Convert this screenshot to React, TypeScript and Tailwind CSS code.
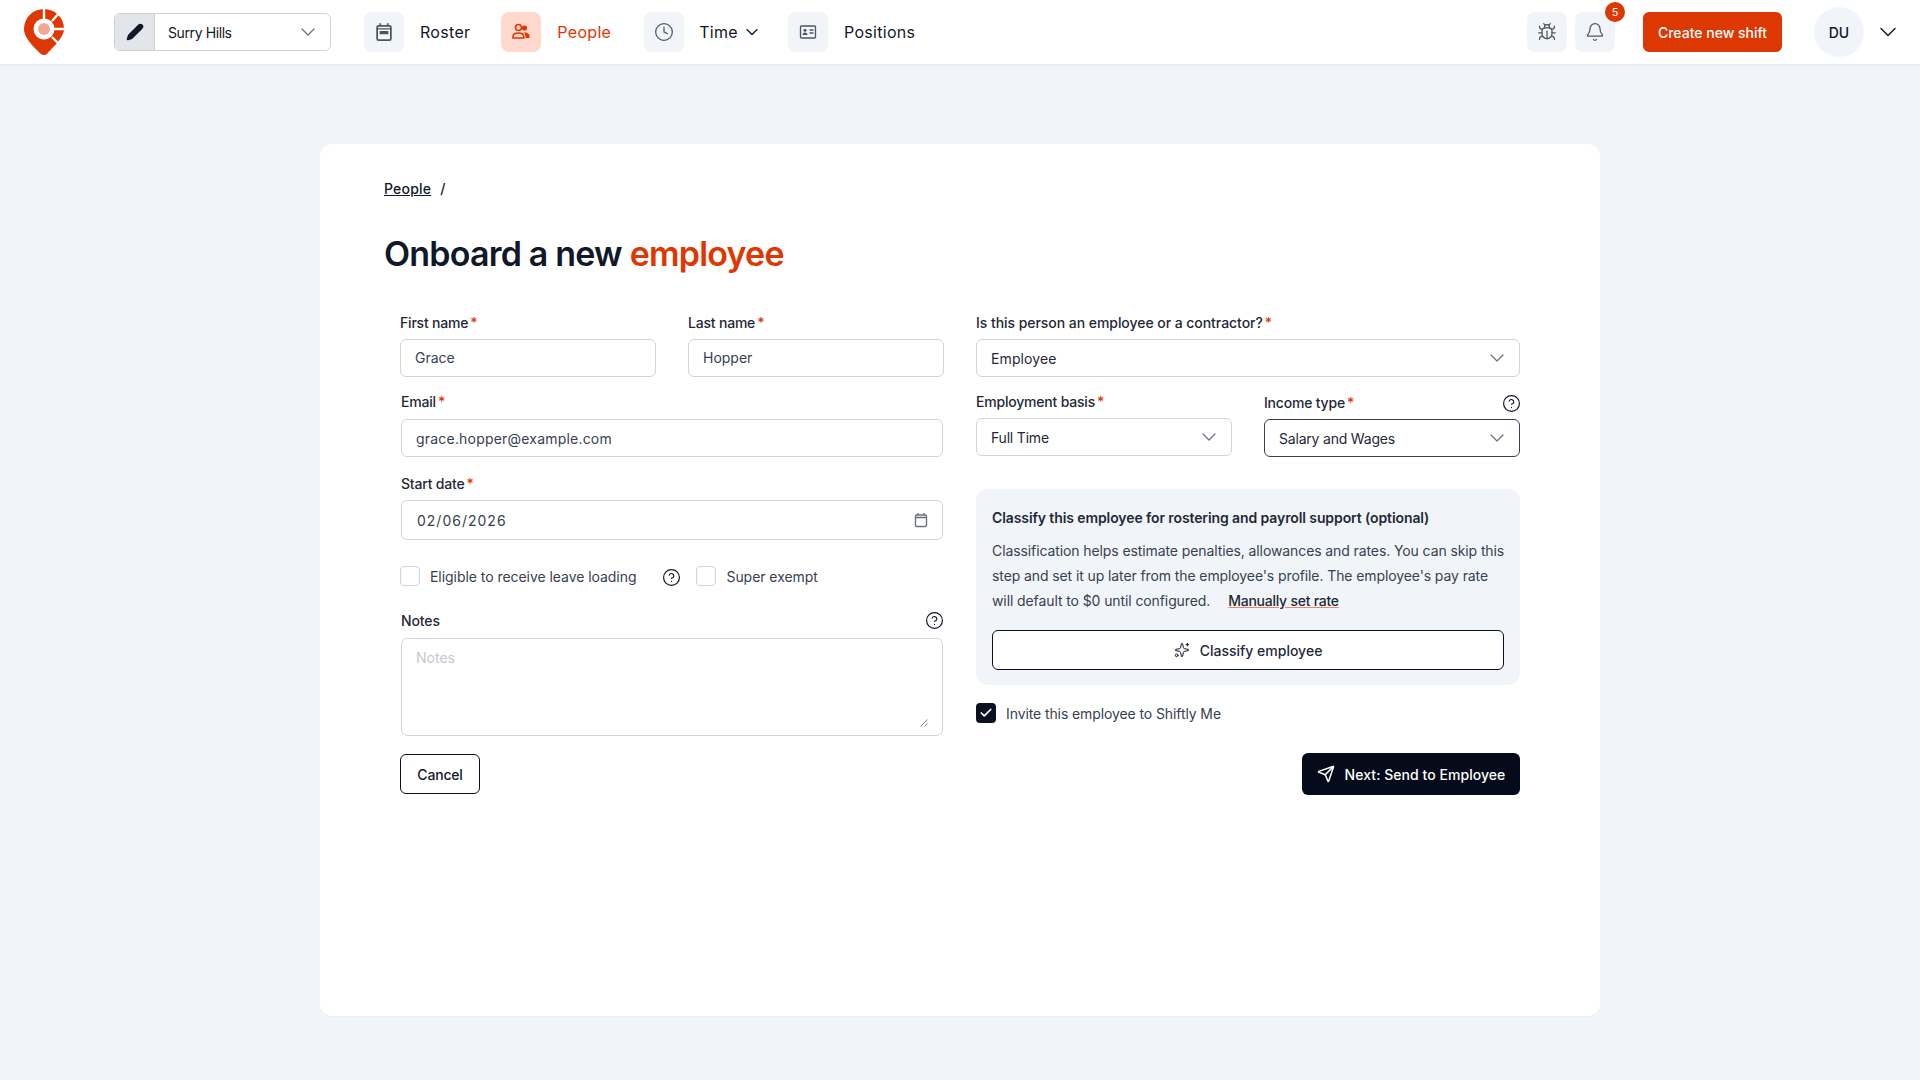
import { Bell, Bug, ChevronDown, CircleHelp, Clock, Pencil, Send, Sparkles, Check } from 'lucide-react';

const font = "font-['Inter',sans-serif]";

function Label({ text, className = '' }: { text: string; className?: string }) {
  return (
    <div className={`text-[14px] leading-[20px] font-[450] text-[#1f2937] tracking-[-0.2px] ${className}`}>
      {text}
      <span className="text-[#dd3702] ml-[2px]">*</span>
    </div>
  );
}

function TextBox({ value, className = '' }: { value: string; className?: string }) {
  return (
    <div className={`flex items-center bg-white border border-[#d1d5db] rounded-[6px] pl-[14px] pr-[14px] text-[14px] text-[#374151] ${className}`}>
      {value}
    </div>
  );
}

function SelectBox({ value, className = '' }: { value: string; className?: string }) {
  return (
    <div className={`flex items-center justify-between bg-white border border-[#d1d5db] rounded-[6px] pl-[14px] pr-[10px] text-[14px] text-[#1f2937] ${className}`}>
      <span>{value}</span>
      <ChevronDown className="w-6 h-6 text-[#6b7280]" strokeWidth={1.25} />
    </div>
  );
}

function NavItem({ icon, label, active, chevron }: { icon: React.ReactNode; label: string; active?: boolean; chevron?: boolean }) {
  return (
    <div className={`flex items-center ${chevron ? 'ml-[2px]' : ''}`}>
      <div className={`w-10 h-10 rounded-[8px] flex items-center justify-center ${active ? 'bg-[#ffd9cd] text-[#dd3702]' : 'bg-[#f1f5f9] text-[#4b5563]'}`}>
        {icon}
      </div>
      <span className={`${chevron ? 'ml-[15px]' : 'ml-4'} text-[16px] tracking-[0.3px] ${active ? 'text-[#dd3702]' : 'text-[#111827]'}`}>{label}</span>
      {chevron && <ChevronDown className="ml-[4px] -mr-[5px] w-5 h-5 text-[#111827]" strokeWidth={1.5} />}
    </div>
  );
}

function CalendarIcon({ size, bar }: { size: number; bar?: boolean }) {
  return (
    <svg width={size} height={size} viewBox="0 0 16 16" fill="none" stroke="currentColor">
      <rect x="2.5" y="3" width="11" height="11.5" rx="1.2" strokeWidth="1.4" />
      <path d="M5 1v2M11 1v2" strokeWidth="1.4" />
      <path d="M2.5 5.5h11" strokeWidth={bar ? 1 : 1.6} />
      {bar && <rect x="4.5" y="7.2" width="7" height="2.6" fill="currentColor" stroke="none" />}
    </svg>
  );
}

function PeopleIcon() {
  return (
    <svg width="20" height="20" viewBox="0 0 20 20" fill="none" stroke="currentColor" strokeWidth="1.6">
      <circle cx="7.5" cy="5.5" r="3" />
      <path d="M2 16v-1.5C2 12.5 4 11 7.5 11c1.5 0 2.8.3 3.8 1 1 .7 1.5 1.6 1.5 2.5V16z" />
      <circle cx="13.5" cy="6" r="2.6" fill="currentColor" stroke="none" />
      <path d="M12.5 10.5c3.5-.5 6 1 6 3.5V16h-4v-1.5c0-1.5-.8-3-2-4z" fill="currentColor" stroke="none" />
    </svg>
  );
}

function CardIcon() {
  return (
    <svg width="18" height="18" viewBox="0 0 18 18" fill="none" stroke="currentColor">
      <rect x="1.5" y="3" width="15" height="12" rx="1" strokeWidth="1.3" />
      <circle cx="6" cy="7.3" r="1.5" fill="currentColor" stroke="none" />
      <path d="M3.5 12c0-1.5 1-2.4 2.5-2.4S8.500 10.500 8.500 12z" fill="currentColor" stroke="none" />
      <path d="M10.500 7h4M10.500 10h4" strokeWidth="1.3" />
    </svg>
  );
}

function Logo() {
  return (
    <svg width="42" height="48" viewBox="0 0 42 48" className="shrink-0">
      <path d="M21 1a20 20 0 0 1 20 20c0 9-13 20-17 25q-3 2-6 0C14 42 1 31 1 21A20 20 0 0 1 21 1z" fill="#dd3702" />
      <circle cx="21" cy="21" r="10.5" fill="#fff" />
      <circle cx="21" cy="21" r="6" fill="#f2a994" />
      <path d="M21 0v11M29 13l8-9M31 21h11M29 29l9 9" stroke="#fff" strokeWidth="2.4" />
    </svg>
  );
}

export default function App() {
  return (
    <div className={`min-h-[1080px] bg-[#f1f5f9] ${font}`}>
      <header className="h-16 bg-white shadow-[0_1px_3px_rgba(0,0,0,0.06)] flex items-center pl-[23px] pr-[18px]">
        <Logo />
        <div className="ml-[49px] w-[217px] h-[38px] flex items-center border border-[#ccd1d8] rounded-[6px] bg-white overflow-hidden">
          <div className="w-10 h-full bg-[#e2e6eb] flex items-center justify-center border-r border-[#ccd1d8]">
            <Pencil className="w-[18px] h-[18px] text-[#111827]" fill="currentColor" strokeWidth={2} />
          </div>
          <span className="ml-[13px] flex-1 text-[14px] tracking-[-0.4px] text-[#111827]">Surry Hills</span>
          <ChevronDown className="mr-[10px] w-6 h-6 text-[#6b7280]" strokeWidth={1.25} />
        </div>
        <nav className="ml-[33px] flex items-center gap-[31px]">
          <NavItem icon={<span className="text-[#4b5563]"><CalendarIcon size={20} bar /></span>} label="Roster" />
          <NavItem active icon={<PeopleIcon />} label="People" />
          <NavItem chevron icon={<Clock className="w-5 h-5" strokeWidth={1.5} />} label="Time" />
          <NavItem icon={<CardIcon />} label="Positions" />
        </nav>
        <div className="ml-auto flex items-center">
          <div className="w-10 h-10 rounded-[8px] bg-[#f1f5f9] flex items-center justify-center text-[#4b5563]">
            <Bug className="w-5 h-5" strokeWidth={1.5} />
          </div>
          <div className="relative ml-2 w-10 h-10 rounded-[8px] bg-[#f1f5f9] flex items-center justify-center text-[#4b5563]">
            <Bell className="w-5 h-5" strokeWidth={1.5} />
            <span className="absolute -top-[10px] -right-[10px] w-5 h-5 rounded-full bg-[#dd3702] text-white text-[11px] flex items-center justify-center">5</span>
          </div>
          <div className="ml-7 w-[139px] h-10 rounded-[6px] bg-[#dd3702] text-white text-[14px] font-medium flex items-center justify-center">
            Create new shift
          </div>
          <div className="ml-8 w-[50px] h-[50px] rounded-full bg-[#f1f5f9] text-[#111827] text-[14px] font-medium flex items-center justify-center">DU</div>
          <ChevronDown className="ml-[10px] w-7 h-7 text-[#111827]" strokeWidth={1.25} />
        </div>
      </header>

      <main className="pt-[80px] flex justify-center">
        <div className="w-[1280px] h-[872px] bg-white rounded-[12px] shadow-[0_1px_2px_rgba(0,0,0,0.04)] px-16 pt-[35px]">
          <div className="flex items-center text-[14px] font-medium text-[#111827] tracking-[0.2px] leading-5">
            <span className="underline">People</span>
            <span className="ml-[9px]">/</span>
          </div>
          <h1 className="mt-[33px] text-[34px] leading-[44px] font-semibold tracking-[-0.8px] text-[#111827]">
            Onboard a new <span className="text-[#dd3702]">employee</span>
          </h1>

          <div className="mt-[37px] px-4 grid grid-cols-2 gap-x-8">
            <div>
              <div className="flex gap-8">
                <div className="w-[256px]">
                  <Label text="First name" className="mb-[6px]" />
                  <TextBox value="Grace" className="h-[38px] pb-[2px]" />
                </div>
                <div className="w-[256px]">
                  <Label text="Last name" className="mb-[6px]" />
                  <TextBox value="Hopper" className="h-[38px] pb-[2px]" />
                </div>
              </div>
              <Label text="Email" className="mt-[15px] mb-[7px] ml-px" />
              <TextBox value="grace.hopper@example.com" className="h-[38px] mx-px tracking-[0.2px]" />
              <Label text="Start date" className="mt-[17px] mb-[6px] ml-px" />
              <div className="relative mx-px">
                <TextBox value="02/06/2026" className="h-[40px] tracking-[1px] pl-[15px]" />
                <span className="absolute right-[14px] top-[12px] text-[#6b7280]">
                  <CalendarIcon size={16} />
                </span>
              </div>
              <div className="mt-[25px] flex items-center h-[22px] text-[14px] text-[#374151] tracking-[-0.05px]">
                <div className="w-5 h-5 rounded-[4px] border border-[#d1d5db] bg-white" />
                <span className="ml-[10px]">Eligible to receive leave loading</span>
                <CircleHelp className="ml-[26px] mt-[2px] w-[19px] h-[19px] text-[#111827]" strokeWidth={1.5} />
                <div className="ml-[15px] w-5 h-5 rounded-[4px] border border-[#d1d5db] bg-white" />
                <span className="ml-[10px]">Super exempt</span>
              </div>
              <div className="mt-[23px] mx-px flex items-center justify-between h-5 text-[14px] font-[450] text-[#1f2937] tracking-[-0.1px]">
                Notes
                <CircleHelp className="-mr-[1px] mt-[1px] w-[19px] h-[19px] text-[#111827]" strokeWidth={1.5} />
              </div>
              <div className="relative mt-[8px] mx-px h-[98px] bg-white border border-[#d1d5db] rounded-[6px] pl-[14px] pt-[8px] text-[14px] text-[#c3c8d0]">
                Notes
                <svg className="absolute right-[14px] bottom-[8px]" width="8" height="8" viewBox="0 0 8 8" fill="none" stroke="#6b7280" strokeWidth="0.8">
                  <path d="M0.5 7.5 7.5 0.5M4.5 7.5l3-3" />
                </svg>
              </div>
              <div className="mt-[18px] w-[80px] h-[40px] rounded-[6px] border border-[#0b1120] bg-white text-[14px] font-medium text-[#111827] tracking-[-0.2px] flex items-center justify-center">
                Cancel
              </div>
            </div>

            <div>
              <Label text="Is this person an employee or a contractor?" className="mb-[6px] !tracking-[-0.05px]" />
              <SelectBox value="Employee" className="h-[38px] tracking-[0.1px]" />
              <div className="mt-[15px] flex gap-8">
                <div className="w-[256px]">
                  <Label text="Employment basis" className="mb-[6px]" />
                  <SelectBox value="Full Time" className="h-[38px] tracking-[-0.2px]" />
                </div>
                <div className="w-[256px]">
                  <div className="flex items-center justify-between mb-[6px] mt-px h-5">
                    <Label text="Income type" />
                    <CircleHelp className="-mr-[1px] w-[19px] h-[19px] text-[#111827]" strokeWidth={1.5} />
                  </div>
                  <SelectBox value="Salary and Wages" className="h-[38px] !border-[#374151] border-[1.5px] tracking-[-0.2px]" />
                </div>
              </div>
              <div className="mt-[32px] h-[196px] bg-[#f1f5f9] rounded-[12px] px-4 pt-[19px]">
                <div className="text-[14px] leading-5 font-semibold text-[#1f2937] tracking-[-0.1px]">
                  Classify this employee for rostering and payroll support (optional)
                </div>
                <p className="mt-[10px] text-[14px] leading-[25px] text-[#374151] tracking-[-0.1px] whitespace-nowrap">
                  Classification helps estimate penalties, allowances and rates. You can skip this
                  <br />
                  step and set it up later from the employee's profile. The employee's pay rate
                  <br />
                  will default to $0 until configured.
                  <span className="ml-[18px] font-[450] text-[#1f2937] underline decoration-[#f0856a] tracking-[-0.25px]">Manually set rate</span>
                </p>
                <div className="mt-[17px] h-10 rounded-[6px] border border-[#0b1120] bg-white text-[14px] font-medium text-[#1f2937] flex items-center justify-center">
                  <Sparkles className="w-4 h-4 mr-[10px] text-[#111827]" strokeWidth={1.5} />
                  Classify employee
                </div>
              </div>
              <div className="mt-[18px] flex items-center h-[20px] text-[14px] text-[#374151] tracking-[-0.1px]">
                <div className="w-5 h-5 rounded-[4px] bg-[#0b1120] flex items-center justify-center">
                  <Check className="w-[14px] h-[14px] text-white" strokeWidth={3} />
                </div>
                <span className="ml-[10px]">Invite this employee to Shiftly Me</span>
              </div>
              <div className="mt-[30px] flex justify-end">
                <div className="w-[218px] h-[42px] rounded-[6px] bg-[#050b1a] text-white text-[14px] font-medium tracking-[0.05px] flex items-center justify-center">
                  <Send className="w-[18px] h-[18px] mr-[10px]" strokeWidth={2} />
                  Next: Send to Employee
                </div>
              </div>
            </div>
          </div>
        </div>
      </main>
    </div>
  );
}
